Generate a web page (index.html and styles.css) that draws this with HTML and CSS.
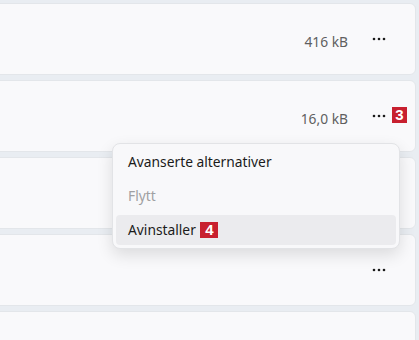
FILE: index.html
```html
<!DOCTYPE html>
<html lang="no">
<head>
  <meta charset="UTF-8">
  <title>Apper</title>
  <link rel="stylesheet" href="styles.css">
</head>
<body>
  <div class="list">
    <div class="card">
      <span class="size">416 kB</span>
      <span class="more">
        <svg width="14" height="4" viewBox="0 0 14 4"><circle cx="2" cy="2" r="1.3"/><circle cx="7" cy="2" r="1.3"/><circle cx="12" cy="2" r="1.3"/></svg>
      </span>
    </div>
    <div class="card">
      <span class="size">16,0 kB</span>
      <span class="more">
        <svg width="14" height="4" viewBox="0 0 14 4"><circle cx="2" cy="2" r="1.3"/><circle cx="7" cy="2" r="1.3"/><circle cx="12" cy="2" r="1.3"/></svg>
        <span class="badge badge-3">3</span>
      </span>
    </div>
    <div class="card">
      <span class="size">8,00 kB</span>
      <span class="more">
        <svg width="14" height="4" viewBox="0 0 14 4"><circle cx="2" cy="2" r="1.3"/><circle cx="7" cy="2" r="1.3"/><circle cx="12" cy="2" r="1.3"/></svg>
      </span>
    </div>
    <div class="card">
      <span class="more">
        <svg width="14" height="4" viewBox="0 0 14 4"><circle cx="2" cy="2" r="1.3"/><circle cx="7" cy="2" r="1.3"/><circle cx="12" cy="2" r="1.3"/></svg>
      </span>
    </div>
    <div class="card last"></div>
  </div>

  <!-- Context menu -->
  <div class="menu">
    <div class="menu-item">Avanserte alternativer</div>
    <div class="menu-item disabled">Flytt</div>
    <div class="menu-item active">Avinstaller <span class="badge">4</span></div>
  </div>
</body>
</html>
```

FILE: styles.css
```css
html, body {
  height: 100%;
  overflow: hidden;
}

body {
  margin: 0;
  background-color: #e9edf2;
  font-family: "Noto Sans", "Open Sans", sans-serif;
  font-size: 13.8px;
}

.list {
  padding-top: 3px;
  display: flex;
  flex-direction: column;
  gap: 5px;
}

.card {
  height: 72px;
  box-sizing: border-box;
  margin: 0 3px 0 -10px;
  padding: 4px 29px 0 0;
  background: #f9f9fb;
  border: 1px solid #e3e6ea;
  border-radius: 6px;
  display: flex;
  justify-content: flex-end;
  align-items: center;
}

.card.last {
  height: 40px;
}

.size {
  color: #5f5f5f;
  margin-right: 24px;
}

.more {
  position: relative;
  width: 14px;
  height: 4px;
  margin-top: -5px;
  display: flex;
}

.more svg {
  fill: #1b1b1b;
}

.badge {
  display: inline-block;
  background: #c8202f;
  color: #fff;
  font-family: "Liberation Sans", Arial, sans-serif;
  font-weight: bold;
  font-size: 15px;
  line-height: 16px;
  width: 16px;
  text-align: center;
}

.badge-3 {
  position: absolute;
  left: 20px;
  top: -7px;
  width: 15px;
}

.menu {
  position: absolute;
  left: 112px;
  top: 143px;
  width: 288px;
  box-sizing: border-box;
  padding: 3px;
  background: #f8f8fa;
  border: 1px solid #e2e3e6;
  border-radius: 8px;
  box-shadow: 0 6px 16px rgba(0, 0, 0, 0.12);
  display: flex;
  flex-direction: column;
  gap: 4px;
}

.menu-item {
  height: 30px;
  line-height: 30px;
  padding-left: 12px;
  border-radius: 4px;
  color: #1b1b1b;
}

.menu-item.disabled {
  color: #a0a0a2;
}

.menu-item.active {
  background: #ebebee;
}

.menu-item .badge {
  width: 18px;
  margin-left: 1px;
}
```
